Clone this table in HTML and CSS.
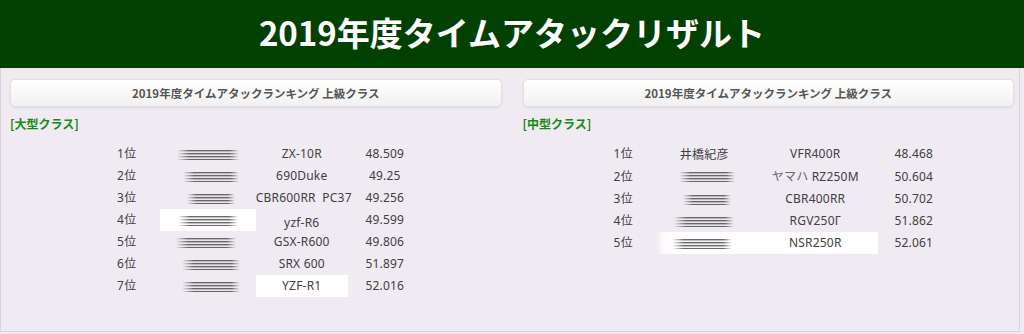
FILE: index.html
```html
<!DOCTYPE html>
<html lang="ja">
<head>
<meta charset="utf-8">
<title>2019年度タイムアタックリザルト</title>
<link rel="stylesheet" href="styles.css">
</head>
<body>
<header class="site-header">
  <h1 class="site-title">2019年度タイムアタックリザルト</h1>
</header>
<main class="main">
  <section class="panel">
    <div class="panel-button">2019年度タイムアタックランキング 上級クラス</div>
    <div class="class-label">[大型クラス]</div>
    <div class="ranking-wrap">
      <table class="ranking ranking-large">
        <colgroup><col class="c-rank"><col class="c-name"><col class="c-model"><col class="c-time"></colgroup>
        <tbody>
          <tr><td>1位</td><td><span class="blur b1"></span></td><td>ZX-10R</td><td>48.509</td></tr>
          <tr><td>2位</td><td><span class="blur b2"></span></td><td>690Duke</td><td>49.25</td></tr>
          <tr><td>3位</td><td><span class="blur b3"></span></td><td class="pre">CBR600RR  PC37</td><td>49.256</td></tr>
          <tr><td>4位</td><td class="hl"><span class="blur b4"></span></td><td class="low">yzf-R6</td><td>49.599</td></tr>
          <tr><td>5位</td><td><span class="blur b5"></span></td><td>GSX-R600</td><td>49.806</td></tr>
          <tr><td>6位</td><td><span class="blur b6"></span></td><td>SRX 600</td><td>51.897</td></tr>
          <tr><td>7位</td><td><span class="blur b7"></span></td><td class="hl">YZF-R1</td><td>52.016</td></tr>
        </tbody>
      </table>
    </div>
  </section>
  <section class="panel">
    <div class="panel-button">2019年度タイムアタックランキング 上級クラス</div>
    <div class="class-label">[中型クラス]</div>
    <div class="ranking-wrap">
      <table class="ranking ranking-middle">
        <colgroup><col class="c-rank"><col class="c-name"><col class="c-model"><col class="c-time"></colgroup>
        <tbody>
          <tr><td>1位</td><td class="jp">井橋紀彦</td><td>VFR400R</td><td>48.468</td></tr>
          <tr><td>2位</td><td><span class="blur b2"></span></td><td><span class="kana">ヤマハ</span> RZ250M</td><td>50.604</td></tr>
          <tr><td>3位</td><td><span class="blur b3"></span></td><td>CBR400RR</td><td>50.702</td></tr>
          <tr><td>4位</td><td><span class="blur b4"></span></td><td>RGV250Γ</td><td>51.862</td></tr>
          <tr><td>5位</td><td class="hl hl-fade"><span class="blur b5"></span></td><td class="hl">NSR250R</td><td>52.061</td></tr>
        </tbody>
      </table>
    </div>
  </section>
</main>
</body>
</html>
```

FILE: styles.css
```css
html, body {
  margin: 0;
  padding: 0;
  background: #f0ebf2;
}
body {
  font-family: "Noto Sans", "Noto Sans CJK JP", sans-serif;
  color: #404040;
}
.site-header {
  background: #004000;
  height: 68px;
  display: flex;
  align-items: center;
  justify-content: center;
}
.site-title {
  margin: 0;
  color: #fff;
  font-family: "Noto Sans CJK JP", sans-serif;
  font-weight: 700;
  font-size: 33px;
  line-height: 1;
  padding-bottom: 3px;
}
.main {
  width: 1020px;
  height: 264px;
  box-sizing: border-box;
  border: 1px solid #d9d3dd;
  border-top: none;
  padding: 11px 5px 0 9px;
  display: grid;
  grid-template-columns: 1fr 1fr;
  column-gap: 21px;
  align-items: start;
}
.panel-button {
  height: 28px;
  box-sizing: border-box;
  border: 1px solid #e2dee4;
  border-radius: 5px;
  background: linear-gradient(#ffffff, #f1f1f1);
  box-shadow: 0 1px 2px rgba(0, 0, 0, 0.08);
  display: flex;
  align-items: center;
  justify-content: center;
  font-family: "Noto Sans CJK JP", sans-serif;
  font-weight: 700;
  font-size: 11.5px;
  color: #555;
}
.class-label {
  margin-top: 8px;
  font-family: "Noto Sans CJK JP", sans-serif;
  font-weight: 700;
  font-size: 12px;
  line-height: 17px;
  color: #138a13;
}
.ranking-wrap {
  margin-top: 11px;
  padding-left: 4px;
}
.ranking {
  margin: 0 auto;
  border-collapse: collapse;
  table-layout: fixed;
  font-size: 12px;
  letter-spacing: 0.2px;
}
.ranking td {
  height: 22px;
  padding: 0;
  text-align: center;
  vertical-align: middle;
  white-space: nowrap;
  line-height: 22px;
}
.ranking-large { width: 328px; }
.ranking-large .c-rank { width: 66px; }
.ranking-large .c-name { width: 96px; }
.ranking-large .c-model { width: 92px; }
.ranking-large .c-time { width: 74px; }
.ranking-middle { width: 359px; }
.ranking-middle .c-rank { width: 65px; }
.ranking-middle .c-name { width: 97px; }
.ranking-middle .c-model { width: 125px; }
.ranking-middle .c-time { width: 72px; }
.ranking td.pre { white-space: pre; }
.ranking td.low { padding-top: 6px; line-height: 16px; box-sizing: border-box; }
.hl { background: #ffffff; }
.hl-fade { background: linear-gradient(to right, #f0ebf2 0, #ffffff 10px); }
.jp, .kana { font-family: "Noto Sans CJK JP", sans-serif; }
.kana { color: #666; }
.blur {
  display: inline-block;
  vertical-align: middle;
  width: 58px;
  height: 10px;
  background: repeating-linear-gradient(to bottom, rgba(80, 80, 80, 0.85) 0 1px, rgba(140, 140, 140, 0.55) 1px 2px, rgba(200, 200, 200, 0.2) 2px 3px);
  filter: blur(0.6px);
  -webkit-mask-image: linear-gradient(to right, transparent 0, #000 20%, #000 85%, transparent 100%);
  mask-image: linear-gradient(to right, transparent 0, #000 20%, #000 85%, transparent 100%);
}
.b1 { width: 62px; }
.b2 { width: 56px; margin-left: 6px; }
.b3 { width: 48px; margin-left: 6px; }
.b4 { width: 60px; }
.b5 { width: 60px; margin-left: -4px; }
.b6 { width: 58px; margin-left: 6px; }
.b7 { width: 58px; margin-left: 6px; }
```
